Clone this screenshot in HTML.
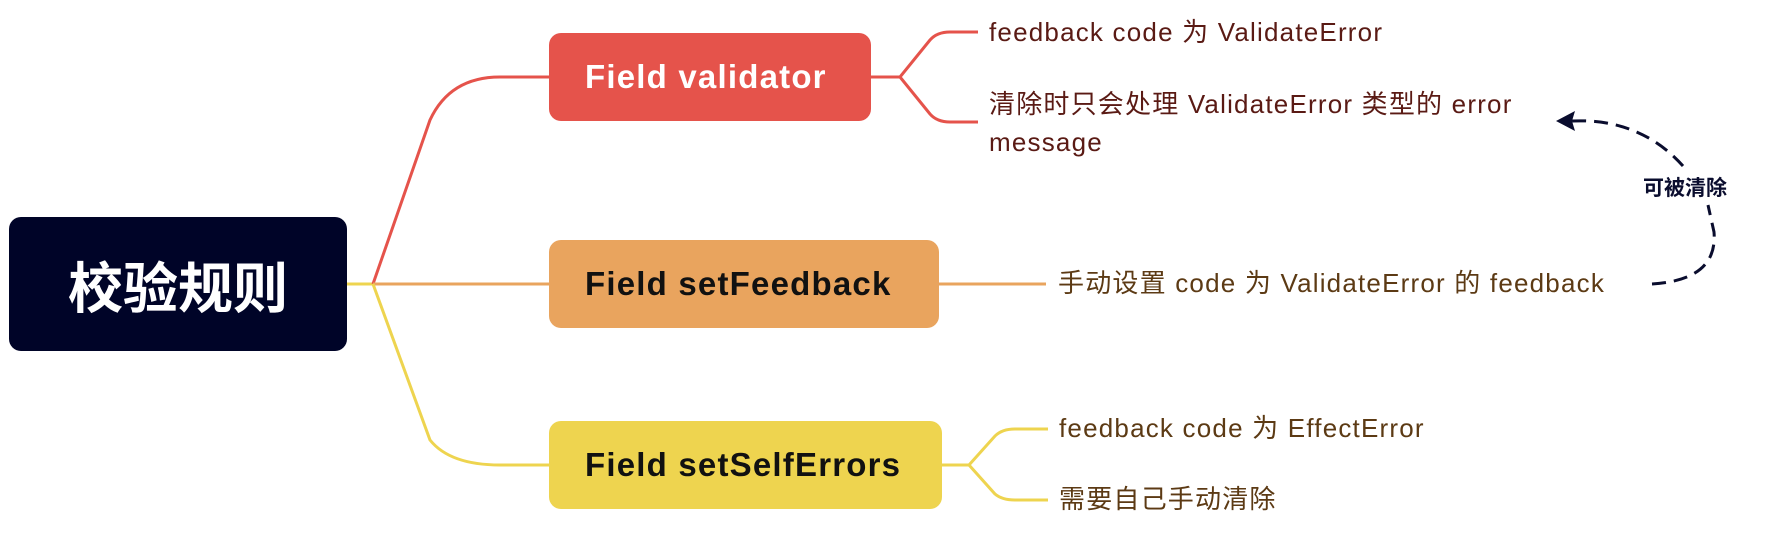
<!DOCTYPE html>
<html><head><meta charset="utf-8"><style>
html,body{margin:0;padding:0;background:#fff;}
body{width:1792px;height:540px;position:relative;overflow:hidden;font-family:"Liberation Sans","Noto Sans CJK SC",sans-serif;}
.box{position:absolute;border-radius:12px;display:flex;align-items:center;justify-content:center;font-weight:bold;font-size:33px;letter-spacing:1.2px;}
.l{justify-content:flex-start;padding-left:36px;box-sizing:border-box;}
.t{position:absolute;font-size:26px;letter-spacing:1.2px;white-space:nowrap;line-height:38px;}
</style></head><body>
<svg width="1792" height="540" style="position:absolute;left:0;top:0">
<g fill="none" stroke-width="3">
<path d="M347 284 H373" stroke="#eed44f"/>
<path d="M373 284 L430 120 Q450 77 500 77 H549" stroke="#e5534b"/>
<path d="M373 284 H549" stroke="#e9a45e"/>
<path d="M373 284 L430 440 Q450 465 500 465 H549" stroke="#eed44f"/>
<path d="M871 77 H900 L930 40 Q937 32 950 32 H978" stroke="#e5534b"/>
<path d="M900 77 L930 114 Q937 122 950 122 H978" stroke="#e5534b"/>
<path d="M939 284 H1046" stroke="#e9a45e"/>
<path d="M942 465 H969 L995 436 Q1002 429 1015 429 H1048" stroke="#eed44f"/>
<path d="M969 465 L995 494 Q1002 500 1015 500 H1048" stroke="#eed44f"/>
<path d="M1652 284 Q1718 280 1714 232 L1708 205" stroke="#0a0d2e" stroke-dasharray="14 8"/>
<path d="M1683 166 Q1640 118 1572 121" stroke="#0a0d2e" stroke-dasharray="14 8"/>
</g>
<path d="M1556 121 L1575 111 L1572 121 L1575 131 Z" fill="#0a0d2e"/>
</svg>
<div class="box" style="left:9px;top:217px;width:338px;height:134px;background:#000428;color:#fff;font-size:55px;letter-spacing:0">校验规则</div>
<div class="box l" style="left:549px;top:33px;width:322px;height:88px;background:#e5534b;color:#fff;">Field validator</div>
<div class="box l" style="left:549px;top:240px;width:390px;height:88px;background:#e9a45e;color:#111;">Field setFeedback</div>
<div class="box l" style="left:549px;top:421px;width:393px;height:88px;background:#eed44f;color:#111;">Field setSelfErrors</div>
<div class="t" style="left:989px;top:13px;color:#5a1a14">feedback code 为 ValidateError</div>
<div class="t" style="left:989px;top:85px;color:#5a1a14">清除时只会处理 ValidateError 类型的 error<br>message</div>
<div class="t" style="left:1058px;top:264px;color:#5c3a14">手动设置 code 为 ValidateError 的 feedback</div>
<div class="t" style="left:1059px;top:409px;color:#5c3a14">feedback code 为 EffectError</div>
<div class="t" style="left:1059px;top:480px;color:#5c3a14">需要自己手动清除</div>
<div class="t" style="left:1643px;top:170px;color:#0a0d2e;font-weight:bold;font-size:21px;letter-spacing:0">可被清除</div>
</body></html>
